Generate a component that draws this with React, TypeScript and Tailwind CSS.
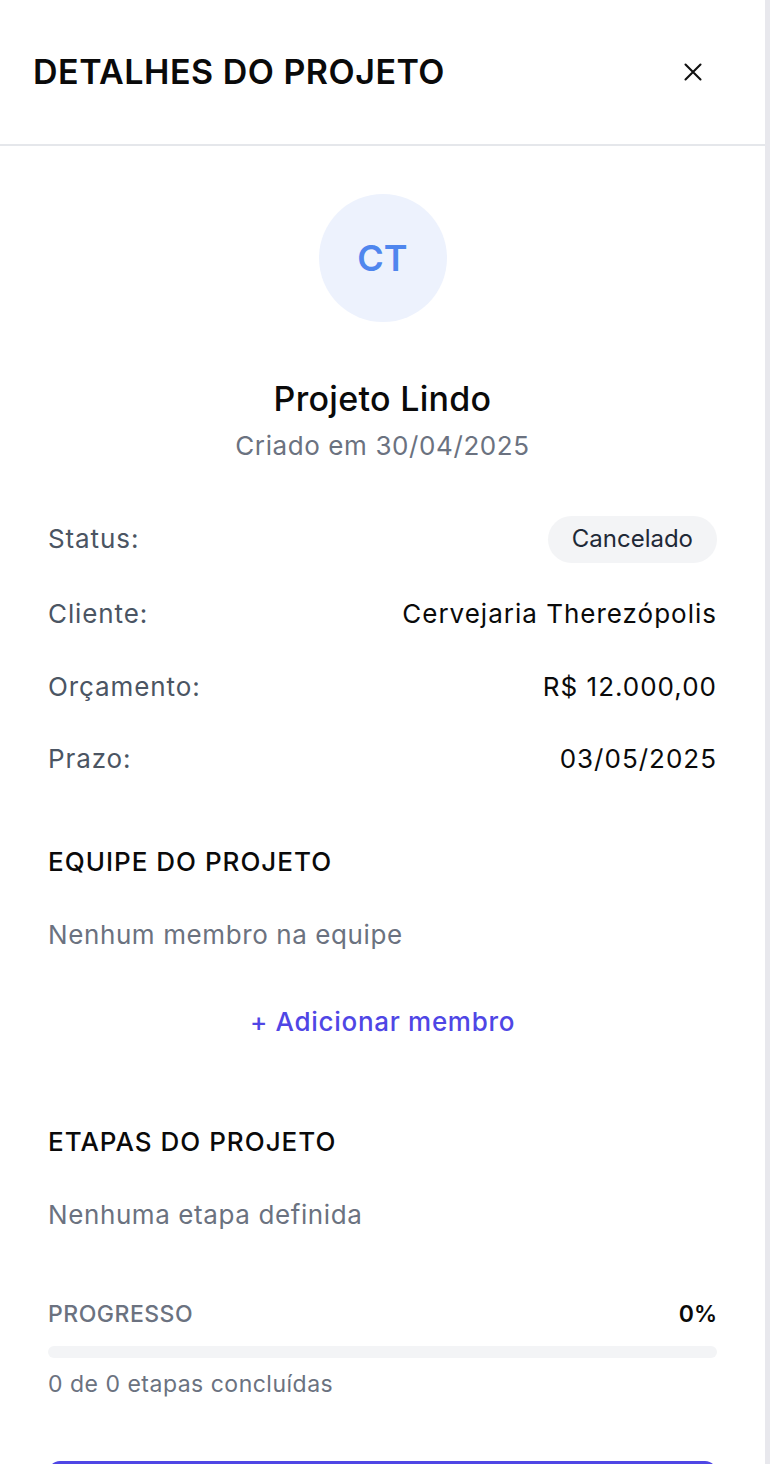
import React from "react";

function CloseIcon() {
  return (
    <svg width="24" height="24" viewBox="0 0 24 24" fill="none" stroke="#111" strokeWidth="2.1" strokeLinecap="round">
      <path d="M4.5 4.5L19.5 19.5M19.5 4.5L4.5 19.5" />
    </svg>
  );
}

function Row({ label, children, className = "" }: { label: string; children: React.ReactNode; className?: string }) {
  return (
    <div className={`flex h-[48px] items-center justify-between ${className}`}>
      <span className="text-[26px] leading-[32px] tracking-[0.9px] text-[#4b5563]">{label}</span>
      {children}
    </div>
  );
}

export default function App() {
  return (
    <div
      className="flex min-h-[1464px] w-[770px] bg-white"
      style={{ fontFamily: "Inter, 'Noto Sans', 'Liberation Sans', sans-serif" }}
    >
      <div className="flex w-[765px] flex-col">
        <header className="flex h-[146px] items-center justify-between border-b-2 border-[#e5e7eb] pl-[33px] pr-[60px]">
          <h1 className="text-[34px] font-semibold leading-[40px] tracking-[0.5px] text-[#0a0a0a]">DETALHES DO PROJETO</h1>
          <button aria-label="Fechar" className="flex h-[24px] w-[24px] items-center justify-center">
            <CloseIcon />
          </button>
        </header>

        <div className="flex flex-col px-[48px] pt-[48px]">
          <div className="flex flex-col items-center">
            <div className="flex h-[128px] w-[128px] items-center justify-center rounded-full bg-[#edf2fd]">
              <span className="text-[36px] font-semibold text-[#4f86ee]">CT</span>
            </div>
            <h2 className="mt-[57px] text-[34px] font-medium leading-[40px] tracking-[0.3px] text-[#0a0a0a]">Projeto Lindo</h2>
            <p className="mt-[11px] text-[26px] leading-[32px] tracking-[0.6px] text-[#6b7280]">Criado em 30/04/2025</p>
          </div>

          <div className="mt-[53px] flex flex-col">
            <Row label="Status:">
              <span className="flex h-[47px] items-center rounded-full bg-[#f3f4f6] px-[24px] text-[24px] text-[#1f2937]">
                Cancelado
              </span>
            </Row>
            <Row label="Cliente:" className="mt-[27px]">
              <span className="text-[26px] leading-[32px] tracking-[1px] text-[#0a0a0a]">Cervejaria Therezópolis</span>
            </Row>
            <Row label="Orçamento:" className="mt-[25px]">
              <span className="text-[26px] leading-[32px] tracking-[1px] text-[#0a0a0a]">R$ 12.000,00</span>
            </Row>
            <Row label="Prazo:" className="mt-[24px]">
              <span className="text-[26px] leading-[32px] tracking-[1px] text-[#0a0a0a]">03/05/2025</span>
            </Row>
          </div>

          <h3 className="mt-[63px] text-[26px] font-medium leading-[32px] tracking-[1px] text-[#0a0a0a]">EQUIPE DO PROJETO</h3>
          <p className="mt-[41px] text-[26px] leading-[32px] tracking-[0.6px] text-[#6b7280]">Nenhum membro na equipe</p>
          <button className="mt-[55px] self-center text-[26px] font-medium leading-[32px] tracking-[0.7px] text-[#4f46e5]">
            + Adicionar membro
          </button>

          <h3 className="mt-[88px] text-[26px] font-medium leading-[32px] tracking-[1px] text-[#0a0a0a]">ETAPAS DO PROJETO</h3>
          <p className="mt-[41px] text-[26px] leading-[32px] tracking-[0.6px] text-[#6b7280]">Nenhuma etapa definida</p>

          <div className="mt-[69px] flex items-center justify-between">
            <span className="text-[23px] font-medium leading-[28px] tracking-[0.5px] text-[#6b7280]">PROGRESSO</span>
            <span className="text-[23px] font-semibold leading-[28px] text-[#0a0a0a]">0%</span>
          </div>
          <div className="mt-[18px] h-[12px] w-full rounded-full bg-[#f3f4f6]">
            <div className="h-full rounded-full bg-[#4f46e5]" style={{ width: "0%" }} />
          </div>
          <p className="mt-[12px] text-[23px] leading-[28px] tracking-[0.5px] text-[#6b7280]">0 de 0 etapas concluídas</p>

          <button aria-label="Editar projeto" className="mt-[63px] h-[64px] w-full rounded-[12px] bg-[#4f46e5]" />
        </div>
      </div>
      <div className="w-[5px] bg-[#e8e8ed]" />
    </div>
  );
}
